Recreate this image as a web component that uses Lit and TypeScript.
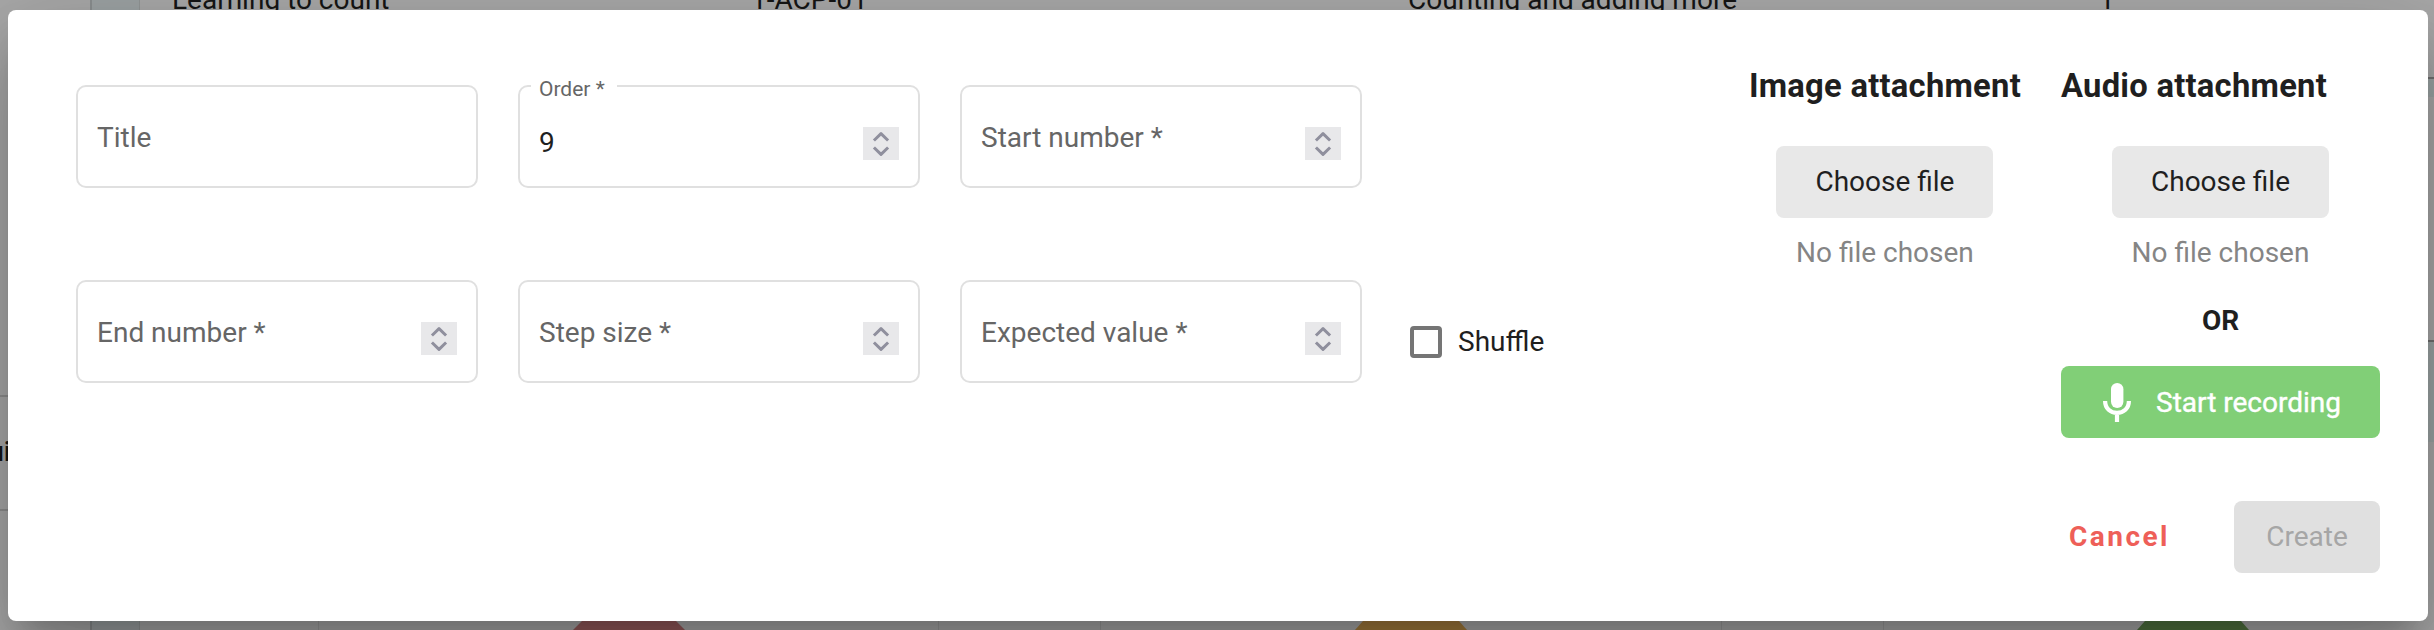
import { LitElement, html, css, svg } from "lit";
import { customElement, property } from "lit/decorators.js";

@customElement("number-field")
class NumberField extends LitElement {
  @property() label = "";
  @property() value = "";
  @property({ type: Boolean }) spinner = false;
  static styles = css`
    :host { display: block; width: 402px; height: 103px; }
    .box { box-sizing: border-box; width: 100%; height: 100%; border: 2px solid #e0e0e0; border-radius: 10px; display: flex; align-items: center; justify-content: space-between; padding: 0 19px; position: relative; }
    .label { color: #666; font-size: 28px; line-height: 36px; margin-top: 2px; }
    .value { color: #1f1f1f; font-size: 28px; line-height: 36px; margin-top: 13px; }
    .floating { position: absolute; left: 11px; top: -13px; padding: 0 12px 0 8px; background: #fff; color: #666; font-size: 21px; line-height: 30px; }
    .spin { width: 36px; height: 33px; margin-top: 13px; background: #e8e8ea; display: block; }
  `;
  render() {
    return html`<div class="box">
      ${this.value
        ? html`<span class="floating">${this.label}</span><span class="value">${this.value}</span>`
        : html`<span class="label">${this.label}</span>`}
      ${this.spinner
        ? html`<svg class="spin" viewBox="0 0 36 33" fill="none" stroke="#8f8f9d" stroke-width="3">${svg`<path d="M12 12.5 L18 6.7 L24 12.5" stroke-linejoin="round" stroke-linecap="square"/><path d="M12 21.5 L18 27.3 L24 21.5" stroke-linejoin="round" stroke-linecap="square"/>`}</svg>`
        : ""}
    </div>`;
  }
}

@customElement("app-root")
class AppRoot extends LitElement {
  static styles = css`
    :host { display: block; width: 2434px; height: 630px; position: relative; overflow: hidden; background: #a9a9a9; font-family: Roboto, sans-serif; font-size: 28px; color: #1f1f1f; }
    .page { position: absolute; inset: 0; }
    .behind { position: absolute; white-space: nowrap; line-height: 36px; color: #161616; }
    .block { position: absolute; }
    .t1 { left: 172px; top: -18px; } .t2 { left: 751px; top: -18px; } .t3 { left: 1408px; top: -18px; } .t4 { left: 2099px; top: -18px; }
    .t5 { right: 2423px; top: 434px; font-weight: 500; }
    .stripe { left: 90px; width: 47px; top: 0; bottom: 0; background: #9da3a4; border-left: 2px solid #8b8f90; border-right: 1px solid #929696; box-sizing: content-box; }
    .vline { width: 1px; top: 600px; bottom: 0; background: #9a9a9a; }
    .v1 { left: 318px; } .v2 { left: 938px; } .v3 { left: 1100px; } .v4 { left: 1721px; } .v5 { left: 1883px; }
    .hline { height: 2px; background: #8e8e8e; }
    .h1 { left: 0; width: 8px; top: 395px; } .h2 { left: 0; width: 8px; top: 509px; }
    .h3 { left: 2428px; right: 0; top: 77px; background: #727272; } .h4 { left: 2428px; right: 0; top: 340px; background: #727272; }
    .band { left: 2428px; right: 0; background: #9da5a5; }
    .b1 { top: 79px; height: 18px; } .b2 { top: 342px; height: 100px; }
    .hex { position: absolute; top: 621px; left: 0; width: 2434px; height: 9px; }
    .dialog { position: absolute; left: 8px; top: 10px; width: 2420px; height: 611px; box-sizing: border-box; background: #fff; border-radius: 8px; padding: 0 48px 48px 68px; display: flex; flex-direction: column; justify-content: space-between;
      box-shadow: 0 22px 30px -14px rgba(0,0,0,.2), 0 48px 76px 6px rgba(0,0,0,.14), 0 18px 92px 16px rgba(0,0,0,.12); }
    .content { display: flex; justify-content: space-between; }
    .fields { display: grid; grid-template-columns: repeat(3, 402px) auto; column-gap: 40px; row-gap: 92px; padding-top: 75px; align-content: start; }
    .title { grid-column: 1; }
    .start { grid-column: 3 / 5; }
    .shuffle { display: flex; align-items: center; gap: 16px; height: 36px; margin: 44px 0 0 8px; line-height: 36px; }
    .check { width: 32px; height: 32px; box-sizing: border-box; border: 4px solid #757575; border-radius: 4px; }
    .attachments { display: flex; gap: 40px; padding-top: 56px; }
    .col { display: flex; flex-direction: column; }
    .stack { display: flex; flex-direction: column; align-items: center; }
    h3 { margin: 0 0 40px; font-size: 32.76px; line-height: 40px; font-weight: 700; white-space: nowrap; letter-spacing: 0.25px; }
    button { font: inherit; color: inherit; border: 0; border-radius: 8px; height: 72px; padding: 0 0 2px; cursor: pointer; }
    .choose { width: 217px; background: #e8e8e8; }
    .none { color: #858585; line-height: 36px; margin-top: 17px; }
    .or { font-weight: 700; line-height: 36px; margin-top: 32px; }
    .record { box-sizing: border-box; width: 319px; margin-top: 27px; background: #81cf77; color: #fff; font-weight: 400; -webkit-text-stroke: 0.4px #fff; display: flex; align-items: center; padding: 0 0 0 42px; gap: 25px; }
    .mic { width: 28px; height: 39px; }
    .actions { display: flex; justify-content: flex-end; gap: 64px; }
    .cancel { background: none; color: #ee5f58; font-weight: 700; letter-spacing: 2.5px; }
    .create { width: 146px; background: #e0e0e0; color: #a6a6a6; }
  `;
  render() {
    return html`
      <div class="page">
        <div class="block stripe"></div>
        <span class="behind t1">Learning to count</span><span class="behind t2">1-ACP-01</span>
        <span class="behind t3">Counting and adding more</span><span class="behind t4">1</span><span class="behind t5">ui</span>
        ${[1, 2, 3, 4, 5].map((n) => html`<div class="block vline v${n}"></div>`)}
        ${[1, 2, 3, 4].map((n) => html`<div class="block hline h${n}"></div>`)}
        <div class="block band b1"></div><div class="block band b2"></div>
        <svg class="hex" viewBox="0 0 2434 9">
          <path d="M573 9 L582 0 H676 L685 9Z" fill="#955a5b"/>
          <path d="M1355 9 L1363 0 H1459 L1467 9Z" fill="#a47b3c"/>
          <path d="M2137 9 L2145 0 H2241 L2249 9Z" fill="#517440"/>
        </svg>
      </div>
      <div class="dialog">
        <div class="content">
          <div class="fields">
            <number-field class="title" label="Title"></number-field>
            <number-field label="Order *" value="9" spinner></number-field>
            <number-field class="start" label="Start number *" spinner></number-field>
            <number-field label="End number *" spinner></number-field>
            <number-field label="Step size *" spinner></number-field>
            <number-field label="Expected value *" spinner></number-field>
            <div class="shuffle"><span class="check"></span><span>Shuffle</span></div>
          </div>
          <div class="attachments">
            <div class="col"><h3>Image attachment</h3>
              <div class="stack"><button class="choose">Choose file</button><span class="none">No file chosen</span></div>
            </div>
            <div class="col"><h3>Audio attachment</h3>
              <div class="stack"><button class="choose">Choose file</button><span class="none">No file chosen</span>
                <span class="or">OR</span>
                <button class="record"><svg class="mic" viewBox="0 0 28 39" fill="none"><rect x="8" y="0" width="12.4" height="25" rx="6.2" fill="#fff"/><path d="M2.1 18 C2.1 25.5 7.5 29.9 14 29.9 S25.9 25.5 25.9 18 M14 30 V39" stroke="#fff" stroke-width="4.2"/></svg>Start recording</button></div>
            </div>
          </div>
        </div>
        <div class="actions"><button class="cancel">Cancel</button><button class="create">Create</button></div>
      </div>`;
  }
}
